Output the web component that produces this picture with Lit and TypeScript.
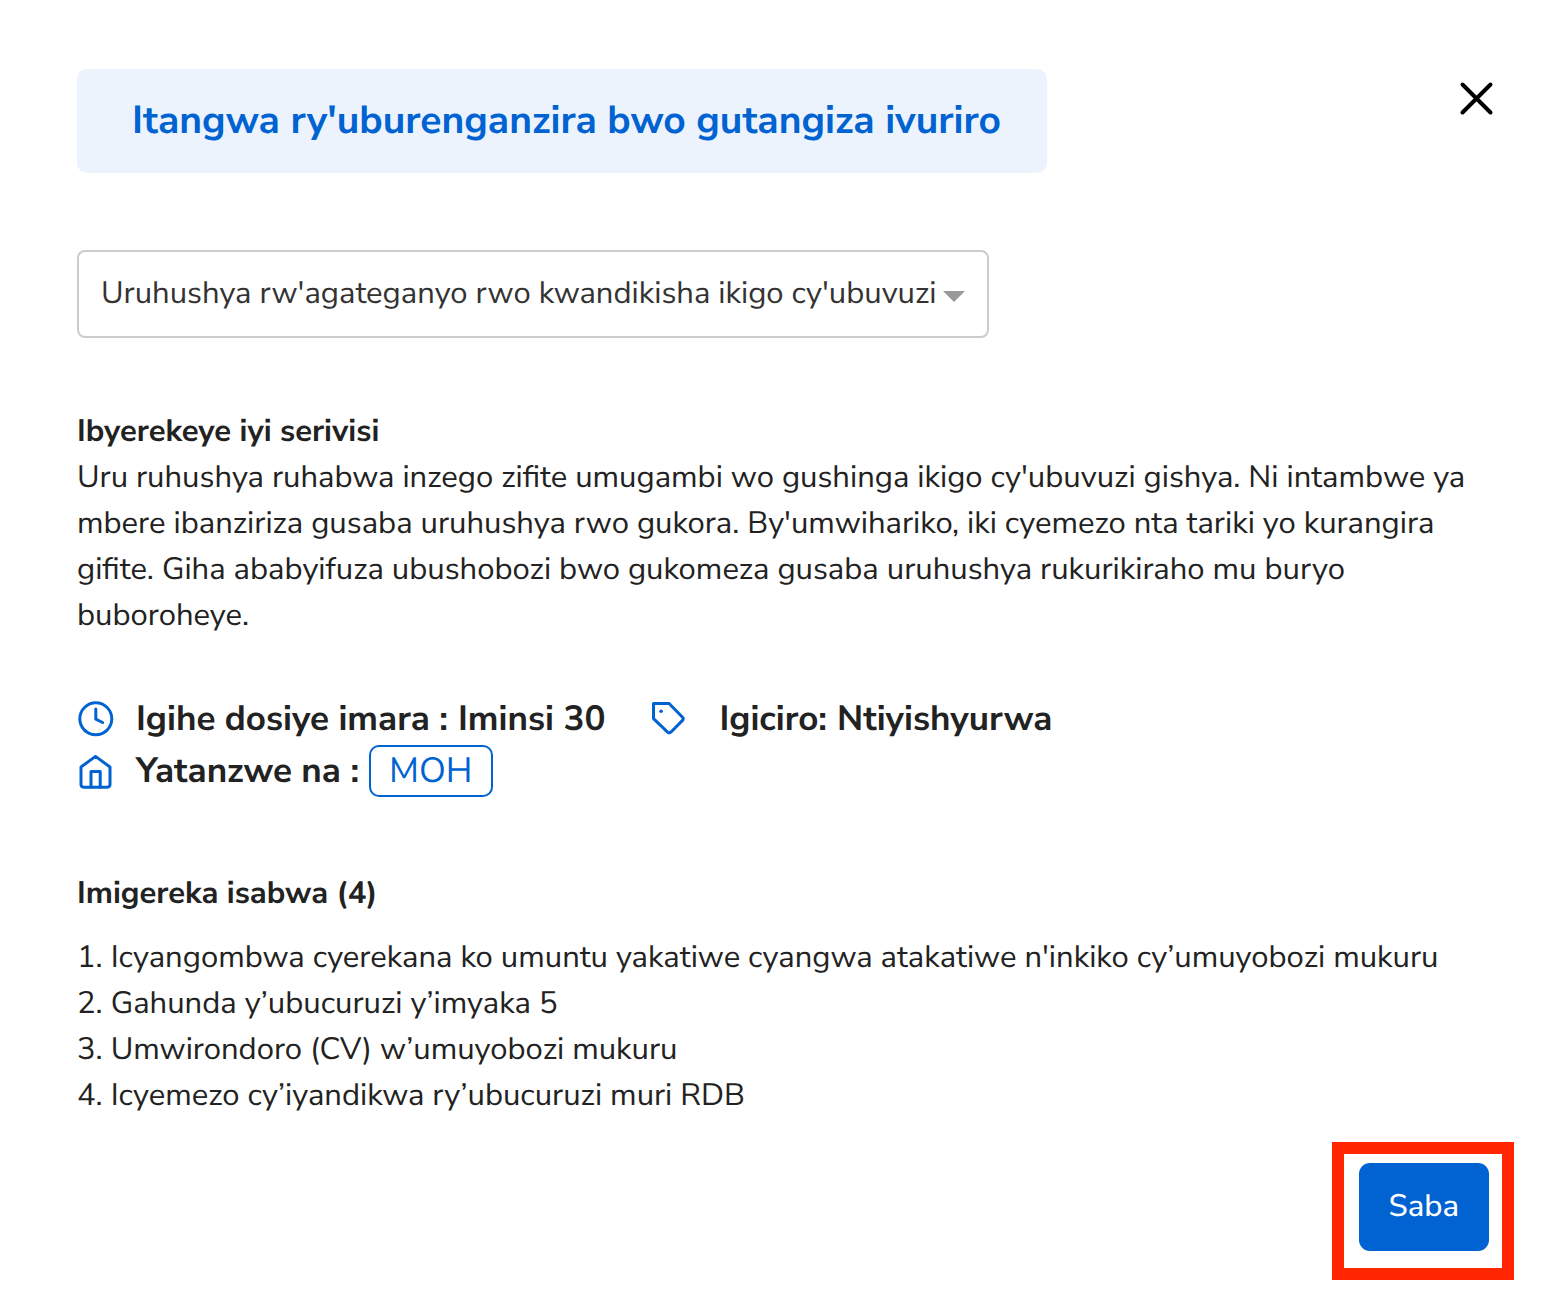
import { LitElement, html, css, svg } from "lit";
import { customElement, state } from "lit/decorators.js";

const clockIcon = svg`<circle cx="17.8" cy="17.8" r="16"/><path d="M17.8 8v10.2l6.8 3.3"/>`;
const tagIcon = svg`<path d="M2.5 2.5h15.6L31.5 16.2q1.4 1.6 0 3.2L19.8 31.2q-1.6 1.4-3.2 0L2.5 17.6z"/><circle class="dot" cx="10.1" cy="10.2" r="1.8"/>`;
const homeIcon = svg`<path d="M17.5 3.4L32 14v17.6q0 2.6-2.6 2.6H5.6q-2.6 0-2.6-2.6V14z"/><path d="M13 34V18.6h9.2V34"/>`;

@customElement("app-root")
export class AppRoot extends LitElement {
  static styles = css`
    :host {
      display: block;
      --blue: #0063d1;
      --ink: #222;
      background: #fff;
      color: var(--ink);
      font: 400 31px/46px "Nunito Sans", Nunito, Lato, sans-serif;
      text-rendering: geometricPrecision;
    }
    * { box-sizing: border-box; }
    h1, h2, p, ol, dl, dd, dt { margin: 0; padding: 0; font-size: inherit; }
    .dialog { padding: 69px 58px 55px 77px; }
    .head {
      display: flex;
      justify-content: space-between;
      align-items: flex-start;
    }
    .title {
      padding: 25px 46px 25px 55px;
      border-radius: 10px;
      background: #ecf3fd;
      color: var(--blue);
      font-size: 39px;
      line-height: 54px;
      font-weight: 700;
    }
    .close {
      display: flex;
      margin-right: -17px;
      padding: 10px;
      border: 0;
      background: none;
    }
    .close svg {
      width: 40px;
      height: 40px;
      stroke: #000;
      stroke-width: 4;
      stroke-linecap: round;
    }
    .picker {
      position: relative;
      display: inline-block;
      margin-top: 77px;
      vertical-align: top;
    }
    .picker select {
      display: block;
      height: 88px;
      padding: 0 50px 2px 22px;
      border: 2px solid #ccc;
      border-radius: 8px;
      background: #fff;
      color: #333;
      font: inherit;
      text-rendering: inherit;
      appearance: none;
    }
    .picker svg {
      position: absolute;
      right: 24px;
      top: 41px;
      width: 22px;
      height: 11px;
      fill: #999;
      pointer-events: none;
    }
    .about { margin-top: 70px; }
    h2 { font-weight: 700; }
    .facts {
      display: flex;
      flex-wrap: wrap;
      margin-top: 55px;
      padding-left: 1px;
      font-size: 35px;
      line-height: 50px;
      font-weight: 700;
    }
    .fact {
      display: flex;
      align-items: center;
      height: 52px;
      margin-right: 46px;
    }
    .fact.last { flex-basis: 100%; margin-right: 0; }
    .fact svg {
      width: 36px;
      height: 36px;
      margin-right: 22px;
      fill: none;
      stroke: var(--blue);
      stroke-width: 3;
      stroke-linejoin: round;
      stroke-linecap: round;
    }
    .fact.price svg { margin-right: 32px; }
    .fact .dot { fill: var(--blue); stroke: none; }
    .fact dt, .fact dd { padding-top: 2px; }
    .fact dd { margin-left: 10px; }
    .fact.last dd { padding-top: 0; }
    .badge {
      display: block;
      padding: 2px 18px 0;
      border: 2px solid var(--blue);
      border-radius: 10px;
      color: var(--blue);
      line-height: 46px;
      font-weight: 400;
      text-decoration: none;
    }
    .files { margin-top: 73px; }
    .files ol { margin-top: 18px; list-style: none; counter-reset: n; }
    .files li { counter-increment: n; }
    .files li::before { content: counter(n) ". "; }
    .actions { display: flex; justify-content: flex-end; margin-top: 45px; }
    .highlight { position: relative; }
    .highlight::after {
      content: "";
      position: absolute;
      inset: -21px -25px -29px -27px;
      border: 12px solid #ff2600;
      pointer-events: none;
    }
    .apply {
      height: 88px;
      padding: 0 30px 2px;
      border: 0;
      border-radius: 11px;
      background: var(--blue);
      color: #fff;
      font: inherit;
      text-rendering: inherit;
      font-weight: 500;
    }
  `;

  @state() private files = [
    "Icyangombwa cyerekana ko umuntu yakatiwe cyangwa atakatiwe n'inkiko cy’umuyobozi mukuru",
    "Gahunda y’ubucuruzi y’imyaka 5",
    "Umwirondoro (CV) w’umuyobozi mukuru",
    "Icyemezo cy’iyandikwa ry’ubucuruzi muri RDB",
  ];

  render() {
    return html`
      <main class="dialog">
        <header class="head">
          <h1 class="title">Itangwa ry'uburenganzira bwo gutangiza ivuriro</h1>
          <button class="close" aria-label="Funga">
            <svg viewBox="0 0 40 40"><path d="M6.5 5.5l28 28M34.5 5.5l-28 28" /></svg>
          </button>
        </header>

        <div class="picker">
          <select aria-label="Serivisi">
            <option>Uruhushya rw'agateganyo rwo kwandikisha ikigo cy'ubuvuzi</option>
          </select>
          <svg viewBox="0 0 22 11"><path d="M0 0h22L11 11z" /></svg>
        </div>

        <section class="about">
          <h2>Ibyerekeye iyi serivisi</h2>
          <p>
            Uru ruhushya ruhabwa inzego zifite umugambi wo gushinga ikigo cy'ubuvuzi gishya.
            Ni intambwe ya mbere ibanziriza gusaba uruhushya rwo gukora. By'umwihariko, iki
            cyemezo nta tariki yo kurangira gifite. Giha ababyifuza ubushobozi bwo gukomeza
            gusaba uruhushya rukurikiraho mu buryo buboroheye.
          </p>
        </section>

        <dl class="facts">
          <div class="fact">
            <svg viewBox="0 0 36 36">${clockIcon}</svg>
            <dt>Igihe dosiye imara :</dt>
            <dd>Iminsi 30</dd>
          </div>
          <div class="fact price">
            <svg viewBox="0 0 36 36">${tagIcon}</svg>
            <dt>Igiciro:</dt>
            <dd>Ntiyishyurwa</dd>
          </div>
          <div class="fact last">
            <svg viewBox="0 0 36 36">${homeIcon}</svg>
            <dt>Yatanzwe na :</dt>
            <dd><a class="badge" href="#moh">MOH</a></dd>
          </div>
        </dl>

        <section class="files">
          <h2>Imigereka isabwa (${this.files.length})</h2>
          <ol>
            ${this.files.map((f) => html`<li>${f}</li>`)}
          </ol>
        </section>

        <footer class="actions">
          <div class="highlight"><button class="apply">Saba</button></div>
        </footer>
      </main>
    `;
  }
}
